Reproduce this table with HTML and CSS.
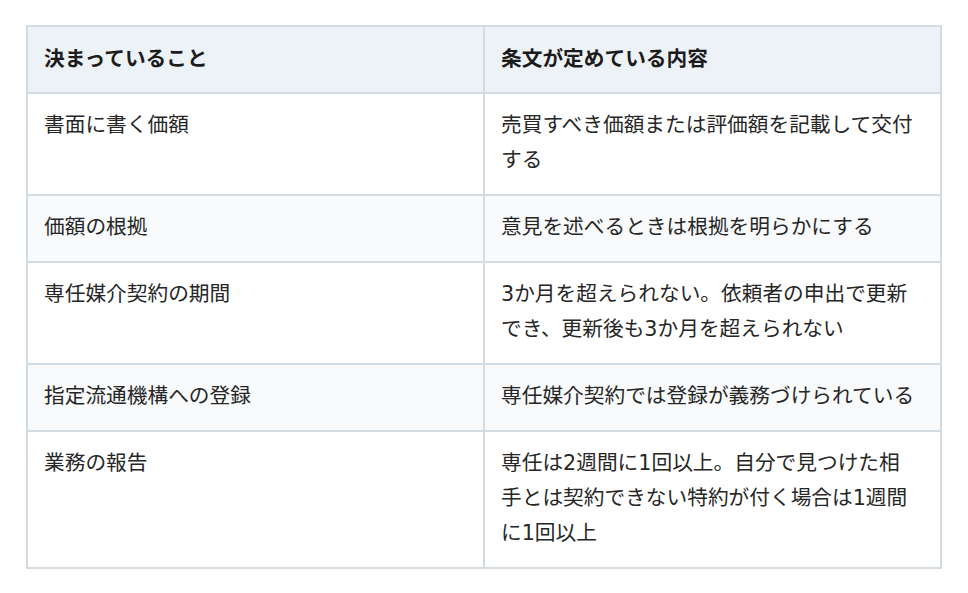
FILE: index.html
```html
<!DOCTYPE html>
<html lang="ja">
<head>
<meta charset="utf-8">
<link rel="stylesheet" href="styles.css">
</head>
<body>
<div class="wrap">
<table class="rules">
  <thead>
    <tr><th>決まっていること</th><th>条文が定めている内容</th></tr>
  </thead>
  <tbody>
    <tr><td>書面に書く価額</td><td>売買すべき価額または評価額を記載して交付する</td></tr>
    <tr><td>価額の根拠</td><td>意見を述べるときは根拠を明らかにする</td></tr>
    <tr><td>専任媒介契約の期間</td><td>3か月を超えられない。依頼者の申出で更新でき、更新後も3か月を超えられない</td></tr>
    <tr><td>指定流通機構への登録</td><td>専任媒介契約では登録が義務づけられている</td></tr>
    <tr><td>業務の報告</td><td>専任は2週間に1回以上。自分で見つけた相手とは契約できない特約が付く場合は1週間に1回以上</td></tr>
  </tbody>
</table>
</div>
</body>
</html>
```

FILE: styles.css
```css
html, body {
  margin: 0;
  padding: 0;
  background: #ffffff;
}
.wrap {
  padding: 25px 26px;
}
.rules {
  width: 916px;
  border-collapse: collapse;
  table-layout: fixed;
  font-family: "DejaVu Sans", "Noto Sans CJK JP", "Noto Sans", sans-serif;
  font-size: 20.7px;
  line-height: 35px;
  color: #262626;
}
.rules th,
.rules td {
  border: 2px solid #d3dbe3;
  padding: 14px 23px 16px 16px;
  text-align: left;
  vertical-align: top;
  width: 50%;
}
.rules th {
  padding-top: 15px;
  padding-bottom: 15px;
  background: #edf2f7;
  font-weight: 700;
  color: #1c1c1c;
}
.rules tbody tr:nth-child(even) td {
  background: #f8fafc;
}
```
